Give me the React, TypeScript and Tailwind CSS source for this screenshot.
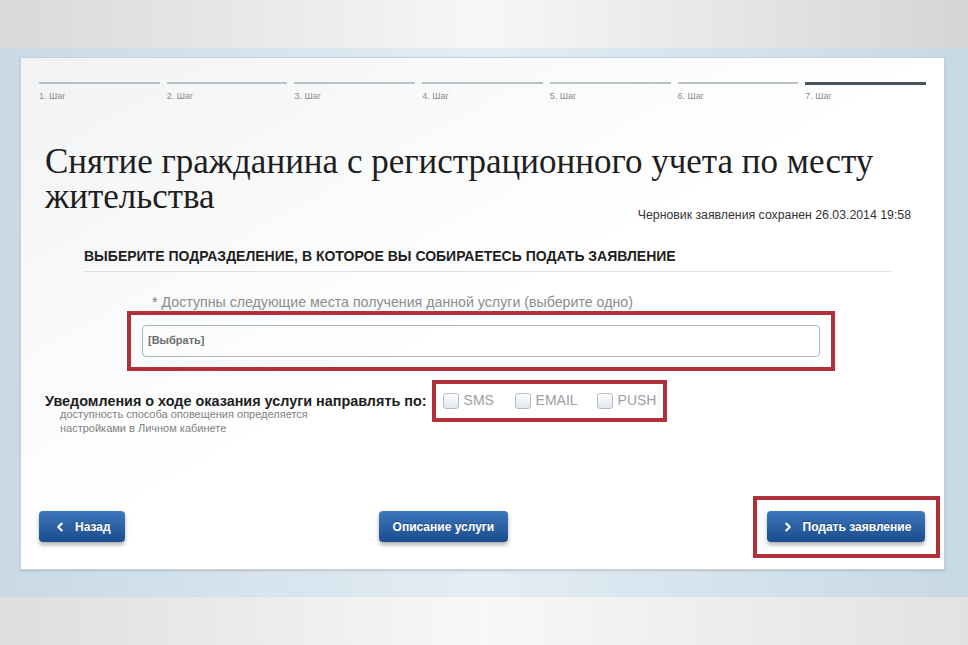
import { ChevronLeft, ChevronRight } from "lucide-react";

const steps = ["1. Шаг", "2. Шаг", "3. Шаг", "4. Шаг", "5. Шаг", "6. Шаг", "7. Шаг"];

function BlueButton({ children, icon }: { children: React.ReactNode; icon?: "left" | "right" }) {
  return (
    <button
      type="button"
      className="h-[31px] flex items-center gap-[8px] rounded-[4px] bg-gradient-to-b from-[#3d77bd] to-[#1b4c8c] px-[14px] text-[12px] font-bold text-white shadow-[0_3px_4px_rgba(0,0,0,0.3)] [text-shadow:0_-1px_0_rgba(0,0,0,0.3)]"
    >
      {icon === "left" && <ChevronLeft size={14} strokeWidth={3.5} />}
      {icon === "right" && <ChevronRight size={14} strokeWidth={3.5} />}
      {children}
    </button>
  );
}

function Check({ label }: { label: string }) {
  return (
    <label className="flex items-center gap-[5px] text-[14px] text-[#9aa0a6]">
      <span className="h-[16px] w-[16px] rounded-[3px] border border-[#b3bec8] bg-gradient-to-b from-white to-[#dfe7ee]" />
      {label}
    </label>
  );
}

export default function App() {
  return (
    <div className="w-[968px] h-[645px] overflow-hidden bg-[#f2f2f2] font-['Liberation_Sans',Arial,sans-serif]">
      <div className="h-[48px] bg-gradient-to-r from-[#d9d9d9] via-[#f7f7f7] to-[#d5d5d5]" />
      <div className="bg-gradient-to-r from-[#c9d9e6] via-[#e3edf4] to-[#c7d8e5] pl-[20px] pr-[23px] pt-[9px] pb-[27px]">
        <div className="h-[513px] bg-gradient-to-br from-[#f1f3f4] via-white to-white border border-[#c6d3dc] shadow-[0_1px_2px_rgba(0,0,0,0.15)] px-[18px] pt-[24px] flex flex-col">
          <div className="grid grid-cols-7 gap-[7px]">
            {steps.map((s, i) => (
              <div key={s}>
                <div className={i === 6 ? "h-[3px] mb-[-1px] bg-[#4b555b]" : "h-[2px] bg-[#b9c2c6]"} />
                <div className="mt-[6px] text-[9px] text-[#8a8a8a]">{s}</div>
              </div>
            ))}
          </div>

          <h1 className="mt-[40px] ml-[6px] font-['Liberation_Serif','Times_New_Roman',serif] text-[35px] leading-[35px] text-[#1e1e1e]">
            <span className="block">Снятие гражданина с регистрационного учета по месту</span>
            <span className="block">жительства</span>
          </h1>

          <div className="mt-[-6px] pr-[15px] text-right text-[12.3px] leading-[14px] text-[#333]">
            Черновик заявления сохранен 26.03.2014 19:58
          </div>

          <div className="mt-[26px] ml-[45px] mr-[35px] border-b border-[#dde2e5] pb-[7px] text-[14px] leading-[16px] font-bold text-[#1e1e1e]">
            ВЫБЕРИТЕ ПОДРАЗДЕЛЕНИЕ, В КОТОРОЕ ВЫ СОБИРАЕТЕСЬ ПОДАТЬ ЗАЯВЛЕНИЕ
          </div>

          <div className="mt-[22px] ml-[113px] text-[14.2px] leading-[16px] text-[#8c8c8c]">
            <span className="text-[#777]">*</span> Доступны следующие места получения данной услуги (выберите одно)
          </div>

          <div className="mt-[1px] ml-[88px] w-[708px] h-[60px] border-[4px] border-[#b1303a] px-[11px] pt-[10px]">
            <div className="h-[32px] rounded-[4px] border border-[#a9b6bd] flex items-center px-[5px] text-[11px] font-bold text-[#6d6d6d]">
              [Выбрать]
            </div>
          </div>

          <div className="mt-[9px] ml-[6px] flex items-start">
            <div className="pt-[13px]">
              <div className="text-[14.4px] leading-[16px] font-bold text-[#1e1e1e]">Уведомления о ходе оказания услуги направлять по:</div>
              <div className="ml-[15px] mt-[-2px] text-[11px] leading-[14px] text-[#808080]">
                доступность способа оповещения определяется
                <br />
                настройками в Личном кабинете
              </div>
            </div>
            <div className="ml-[5px] w-[235px] h-[42px] shrink-0 border-[4px] border-[#b1303a] flex items-center pl-[7px]">
              <div className="w-[72px]"><Check label="SMS" /></div>
              <div className="w-[82px]"><Check label="EMAIL" /></div>
              <Check label="PUSH" />
            </div>
          </div>

          <div className="mt-[61px] flex items-center">
            <BlueButton icon="left">Назад</BlueButton>
            <div className="ml-[254px]">
              <BlueButton>Описание услуги</BlueButton>
            </div>
            <div className="ml-auto mr-[-14px] w-[187px] h-[62px] border-[4px] border-[#b1303a] flex items-center justify-center">
              <div className="w-[160px]">
                <BlueButton icon="right">Подать заявление</BlueButton>
              </div>
            </div>
          </div>
        </div>
      </div>
      <div className="h-[48px] bg-gradient-to-r from-[#dedede] via-[#f8f8f8] to-[#e2e2e2]" />
    </div>
  );
}
